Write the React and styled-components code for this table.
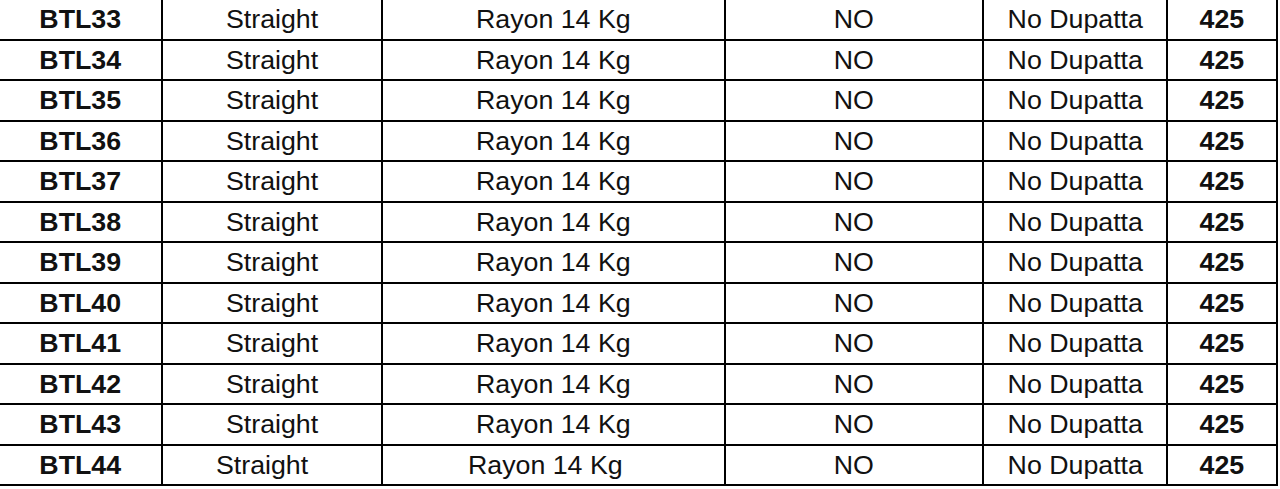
import styled, { createGlobalStyle } from 'styled-components'

const Global = createGlobalStyle`
    html, body {
        margin: 0;
        padding: 0;
        background: #fff;
    }
    body {
        font-family: "Liberation Sans", Arial, sans-serif;
        color: #111;
    }
`

const Table = styled.div`
    display: grid;
    grid-template-columns: 163px 220px 343px 258px 184px 110px;
    grid-auto-rows: 40.5px;
    width: 1278px;
`

const Cell = styled.div`
    box-sizing: border-box;
    display: flex;
    align-items: center;
    justify-content: center;
    border-right: 2px solid #000;
    border-bottom: 2px solid #000;
    font-size: 25px;
    font-weight: ${p => (p.$bold ? 'bold' : 'normal')};
    padding-right: ${p => p.$shift || 0}px;
    padding-top: 1px;
`

const Text = styled.span`
    display: inline-block;
    transform: scaleX(1.07);
    line-height: 1;
    white-space: nowrap;
`

const rows = Array.from({ length: 12 }, (_, i) => `BTL${33 + i}`)

function App() {
    return (
        <>
            <Global />
            <Table>
                {rows.map((code, i) => {
                    const last = i === rows.length - 1
                    return [
                        <Cell key={code + 'a'} $bold><Text>{code}</Text></Cell>,
                        <Cell key={code + 'b'} $shift={last ? 20 : 0}><Text>Straight</Text></Cell>,
                        <Cell key={code + 'c'} $shift={last ? 16 : 0}><Text>Rayon 14 Kg</Text></Cell>,
                        <Cell key={code + 'd'}><Text>NO</Text></Cell>,
                        <Cell key={code + 'e'}><Text>No Dupatta</Text></Cell>,
                        <Cell key={code + 'f'} $bold><Text>425</Text></Cell>,
                    ]
                })}
            </Table>
        </>
    )
}

export default App
